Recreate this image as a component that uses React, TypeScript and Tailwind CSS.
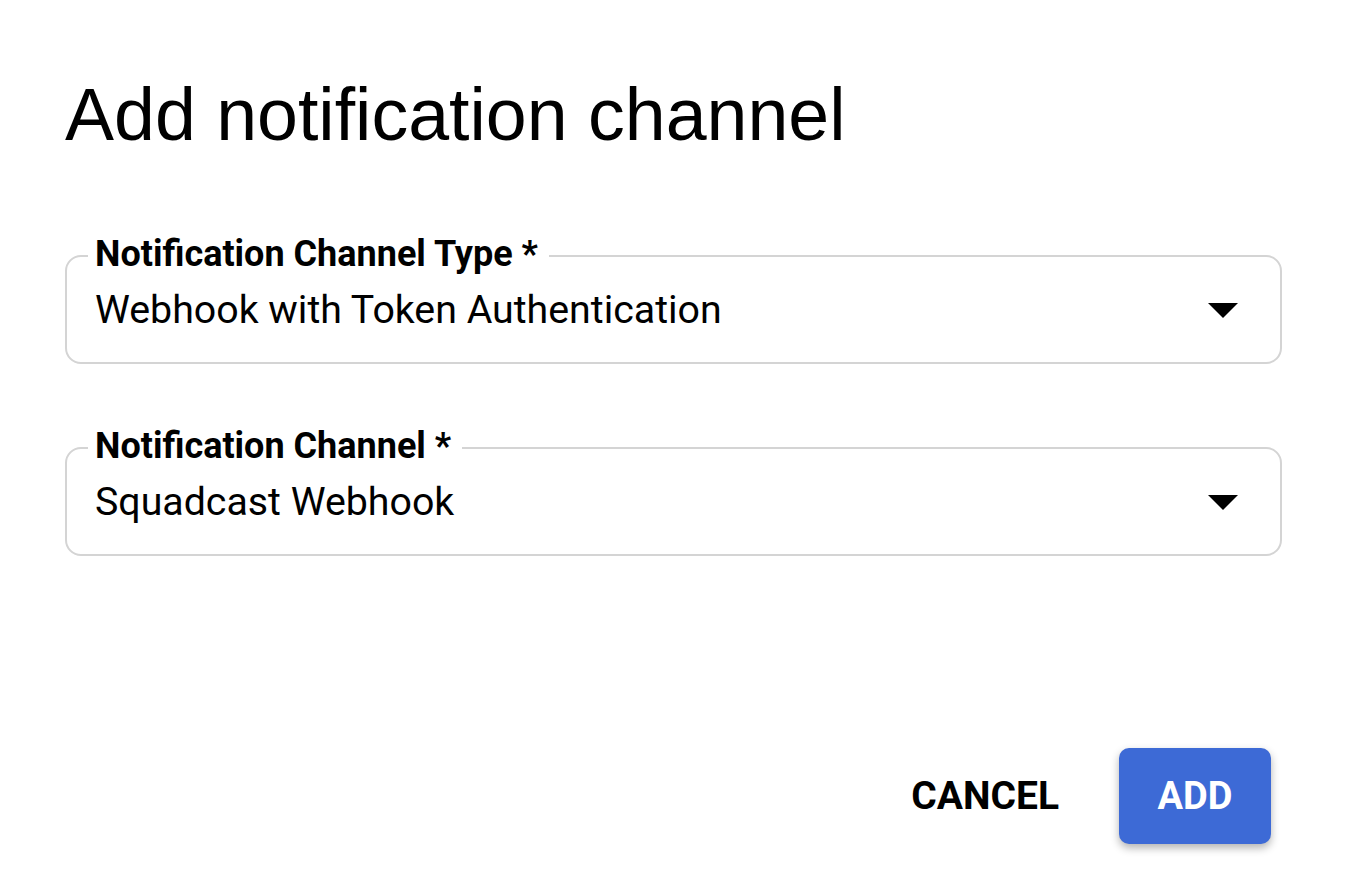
import React from 'react';

interface SelectFieldProps {
  label: string;
  value: string;
}

function SelectField({ label, value }: SelectFieldProps) {
  return (
    <fieldset className="border-2 border-[#d4d4d4] rounded-[16px] pl-[28px] pr-[42px] pb-[29px] m-0 min-w-0">
      <legend className="ml-[-7px] pl-[7px] pr-[11px] pb-[4px] text-[36px] leading-[42px] font-bold text-black">
        {label}
      </legend>
      <div className="flex items-center justify-between mt-[8px]">
        <span className="text-[39.3px] leading-[46px] text-black">{value}</span>
        <svg width="30" height="15" viewBox="0 0 30 15" className="shrink-0 mt-[1px]">
          <path d="M0 0 L30 0 L15 15 Z" fill="#000" />
        </svg>
      </div>
    </fieldset>
  );
}

export default function App() {
  return (
    <div
      className="w-[1352px] h-[890px] bg-white pl-[65px] pr-[70px] pt-[73px] flex flex-col"
      style={{ fontFamily: 'Roboto, "Liberation Sans", sans-serif' }}
    >
      <h1
        className="text-[73.5px] leading-[84px] font-normal text-black"
        style={{ fontFamily: '"Liberation Sans", Arial, sans-serif' }}
      >
        Add notification channel
      </h1>

      <div className="mt-[76px] flex flex-col gap-[61px]">
        <SelectField label="Notification Channel Type *" value="Webhook with Token Authentication" />
        <SelectField label="Notification Channel *" value="Squadcast Webhook" />
      </div>

      <div className="mt-[192px] flex items-center justify-end gap-[60px] pr-[11px]">
        <button className="text-[39px] font-bold text-black">CANCEL</button>
        <button className="w-[152px] h-[96px] rounded-[10px] bg-[#3d6ad6] text-white text-[38px] font-bold shadow-[0_4px_8px_rgba(0,0,0,0.3)]">
          ADD
        </button>
      </div>
    </div>
  );
}
